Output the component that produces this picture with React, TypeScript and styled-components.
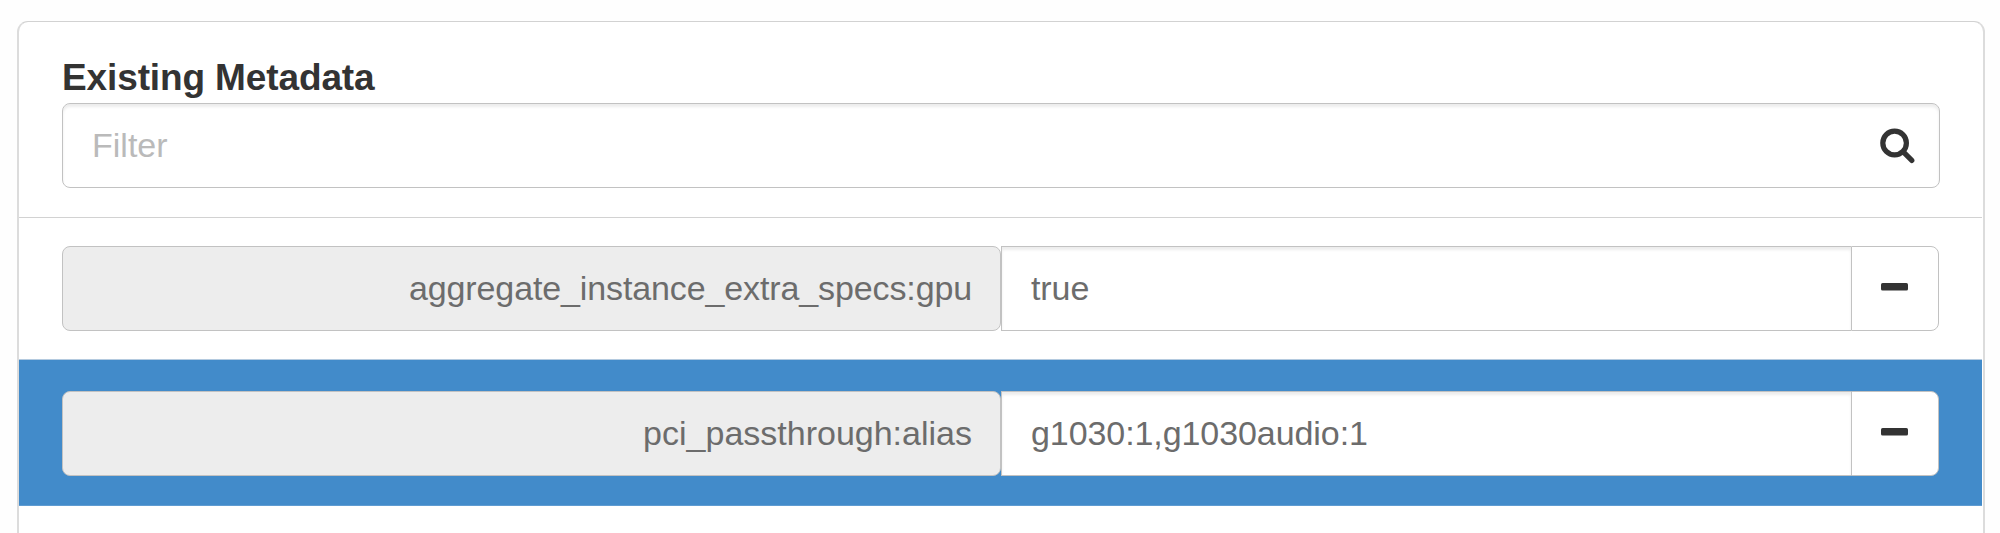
import React from 'react';
import styled, { createGlobalStyle, css } from 'styled-components';

const GlobalStyle = createGlobalStyle`
  * { box-sizing: border-box; }
  body {
    margin: 0;
    background: #fefefe;
    overflow: hidden;
    font-family: "Liberation Sans", Arial, sans-serif;
  }
`;

const Page = styled.main`
  height: 533px;
  padding: 21px 15px 0 17px;
  overflow: hidden;
`;

const Panel = styled.section`
  height: 560px;
  background: #fff;
  border: 2px solid #dcdcdc;
  border-top: 1px solid #d2d2d2;
  border-radius: 11px;
`;

const Header = styled.header`
  padding: 33px 43px 29px;
`;

const Title = styled.h2`
  margin: 0;
  height: 48px;
  line-height: 45px;
  font-size: 37px;
  font-weight: 700;
  letter-spacing: -0.12px;
  color: #333;
  white-space: nowrap;
`;

const box = css`
  border: 1px solid #c2c2c2;
  outline: 0;
`;

const FilterBox = styled.label`
  ${box}
  display: flex;
  align-items: center;
  justify-content: space-between;
  height: 85px;
  width: 1878px;
  padding: 0 24px 0 29px;
  border-radius: 8px;
  box-shadow: inset 0 3px 3px rgba(0, 0, 0, 0.075);
`;

const FilterInput = styled.input`
  flex: 1;
  min-width: 0;
  padding: 0;
  border: 0;
  outline: 0;
  background: transparent;
  font: 34px "Liberation Sans", Arial, sans-serif;
  color: #555;
  &::placeholder {
    color: #bababa;
    opacity: 1;
  }
`;

const List = styled.ul`
  margin: 0 1px 0 0;
  padding: 0;
  list-style: none;
  border-top: 1px solid #d2d2d2;
`;

const Item = styled.li<{ $active?: boolean }>`
  display: flex;
  padding: ${p => (p.$active ? '31px 0 29px 43px' : '28px 0 28px 43px')};
  border-top: ${p => (p.$active ? '1px solid #b4cadf' : '0')};
  border-bottom: ${p => (p.$active ? '1px solid #5f9cd2' : '0')};
  background: ${p => (p.$active ? '#428bca' : '#fff')};
`;

const Key = styled.span<{ $tracking: number }>`
  ${box}
  display: flex;
  align-items: center;
  justify-content: flex-end;
  width: 939px;
  height: 85px;
  padding-right: 28px;
  border-radius: 8px;
  background: #ededed;
  font-size: 34px;
  letter-spacing: ${p => p.$tracking}px;
  color: #6c6c6c;
`;

const Value = styled.span`
  ${box}
  display: flex;
  align-items: center;
  width: 850px;
  height: 85px;
  padding-left: 29px;
  border-right: 0;
  background: #fff;
  box-shadow: inset 0 3px 3px rgba(0, 0, 0, 0.075);
  font-size: 34px;
  letter-spacing: -0.08px;
  color: #6c6c6c;
`;

const RemoveButton = styled.button`
  ${box}
  display: flex;
  align-items: center;
  width: 88px;
  height: 85px;
  padding: 0 0 3px 29px;
  border-radius: 0 8px 8px 0;
  background: #fff;
`;

const Minus = () => (
  <svg width="27" height="8" viewBox="0 0 27 8" aria-hidden="true">
    <rect width="27" height="7.6" rx="1.6" fill="#333" />
  </svg>
);

const SearchIcon = () => (
  <svg width="36" height="36" viewBox="0 0 36 36" fill="none" stroke="#333" aria-hidden="true">
    <circle cx="15.6" cy="15" r="11.8" strokeWidth="5.2" />
    <path d="M24.8 24.4 32.8 32.4" strokeWidth="5.2" strokeLinecap="round" />
  </svg>
);

const metadata = [
  { name: 'aggregate_instance_extra_specs:gpu', value: 'true', active: false, tracking: -0.12 },
  { name: 'pci_passthrough:alias', value: 'g1030:1,g1030audio:1', active: true, tracking: 0 },
];

export default function App() {
  return (
    <Page>
      <GlobalStyle />
      <Panel>
        <Header>
          <Title>Existing Metadata</Title>
          <FilterBox>
            <FilterInput placeholder="Filter" />
            <SearchIcon />
          </FilterBox>
        </Header>
        <List>
          {metadata.map(m => (
            <Item key={m.name} $active={m.active}>
              <Key $tracking={m.tracking}>{m.name}</Key>
              <Value>{m.value}</Value>
              <RemoveButton type="button" aria-label={`Remove ${m.name}`}>
                <Minus />
              </RemoveButton>
            </Item>
          ))}
        </List>
      </Panel>
    </Page>
  );
}
